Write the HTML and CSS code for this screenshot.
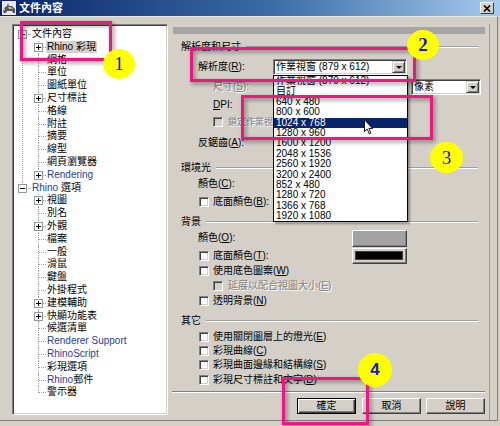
FILE: index.html
```html
<!DOCTYPE html>
<html lang="zh-Hant">
<head>
  <meta charset="UTF-8" />
  <title>文件內容</title>
  <link rel="stylesheet" href="styles.css">
</head>
<body>

  <div class="window">

    <!-- Title bar -->
    <div class="titlebar">
      <svg class="app-icon" viewBox="0 0 14 14">
        <rect x="0" y="0" width="14" height="14" fill="#e8e8e8" />
        <path d="M1 10 L3 6 L5 5 L6 2 L7 5 L10 5 L13 8 L13 12 L11 12 L10 10 L5 10 L4 12 L2 12 Z" fill="#555" />
        <path d="M6 6 L9 6 L11 8 L7 8 Z" fill="#bbb" />
        <rect x="2" y="8" width="1" height="1" fill="#fff" />
      </svg>
      <span class="title">文件內容</span>
      <div class="close">
        <svg viewBox="0 0 8 7" width="8" height="7">
          <path d="M1 0.5 L7 6.5 M7 0.5 L1 6.5" stroke="#000" stroke-width="1.6" />
        </svg>
      </div>
    </div>

    <div class="main">

      <!-- Left tree -->
      <div class="tree">
        <ul class="tree-root">
          <li>
            <div class="node"><i class="exp"></i>文件內容</div>
            <ul>
              <li><div class="node"><i class="exp plus"></i><span class="sel">Rhino 彩現</span></div></li>
              <li><div class="node">網格</div></li>
              <li><div class="node">單位</div></li>
              <li><div class="node">圖紙單位</div></li>
              <li><div class="node"><i class="exp plus"></i>尺寸標註</div></li>
              <li><div class="node">格線</div></li>
              <li><div class="node">附註</div></li>
              <li><div class="node">摘要</div></li>
              <li><div class="node">線型</div></li>
              <li><div class="node">網頁瀏覽器</div></li>
              <li><div class="node"><i class="exp plus"></i><span class="en">Rendering</span></div></li>
            </ul>
          </li>
          <li>
            <div class="node"><i class="exp"></i><span class="en">Rhino</span> 選項</div>
            <ul>
              <li><div class="node"><i class="exp plus"></i>視圖</div></li>
              <li><div class="node">別名</div></li>
              <li><div class="node"><i class="exp plus"></i>外觀</div></li>
              <li><div class="node">檔案</div></li>
              <li><div class="node">一般</div></li>
              <li><div class="node">滑鼠</div></li>
              <li><div class="node">鍵盤</div></li>
              <li><div class="node">外掛程式</div></li>
              <li><div class="node"><i class="exp plus"></i>建模輔助</div></li>
              <li><div class="node"><i class="exp plus"></i>快顯功能表</div></li>
              <li><div class="node">候選清單</div></li>
              <li><div class="node"><span class="en">Renderer Support</span></div></li>
              <li><div class="node"><span class="en">RhinoScript</span></div></li>
              <li><div class="node">彩現選項</div></li>
              <li><div class="node"><span class="en">Rhino</span>郵件</div></li>
              <li><div class="node">警示器</div></li>
            </ul>
          </li>
        </ul>
      </div>

      <!-- Right page -->
      <div class="page">
        <div class="page-bar"></div>

        <div class="group mt6">
          <div class="group-title">解析度和尺寸</div>

          <div class="field mt5">
            <span class="lbl">解析度(<u>R</u>):</span>
            <div class="combo wide">
              <span class="combo-text">作業視窗 (879 x 612)</span><i class="drop"></i>
              <ul class="droplist">
                <li>作業視窗 (879 x 612)</li>
                <li>自訂</li>
                <li>640 x 480</li>
                <li>800 x 600</li>
                <li class="hl">1024 x 768</li>
                <li>1280 x 960</li>
                <li>1600 x 1200</li>
                <li>2048 x 1536</li>
                <li>2560 x 1920</li>
                <li>3200 x 2400</li>
                <li>852 x 480</li>
                <li>1280 x 720</li>
                <li>1366 x 768</li>
                <li>1920 x 1080</li>
              </ul>
            </div>
          </div>

          <div class="field sub mt4">
            <span class="lbl dis">尺寸(<u>S</u>):</span>
            <div class="combo wide"><span class="combo-text"></span><i class="drop"></i></div>
            <div class="combo unit"><span class="combo-text">像素</span><i class="drop"></i></div>
          </div>

          <div class="field sub mt2">
            <span class="lbl"><u>D</u>PI:</span>
          </div>

          <!-- only the start of this label shows beside the open list -->
          <div class="check sub dis mt2"><i class="box"></i><span class="short">鎖定作業視</span></div>

          <div class="field mt6">
            <span class="lbl">反鋸齒(<u>A</u>):</span>
          </div>
        </div>

        <div class="group mt10">
          <div class="group-title">環境光</div>
          <div class="field row14 mt2"><span class="lbl">顏色(<u>C</u>):</span></div>
          <div class="check mt4"><i class="box"></i>底面顏色(<u>B</u>):</div>
        </div>

        <div class="group mt6">
          <div class="group-title">背景</div>
          <div class="field tall">
            <span class="lbl swatch-lbl">顏色(<u>O</u>):</span>
            <div class="swatch gray"></div>
          </div>
          <div class="field swatch-row mt1">
            <div class="check"><i class="box"></i>底面顏色(<u>T</u>):</div>
            <div class="swatch dark"><i></i></div>
          </div>
          <div class="check"><i class="box"></i>使用底色圖案(<u>W</u>)</div>
          <div class="check sub dis mt1"><i class="box"></i>延展以配合視圖大小(<u>E</u>)</div>
          <div class="check mt1"><i class="box"></i>透明背景(<u>N</u>)</div>
        </div>

        <div class="group mt6">
          <div class="group-title">其它</div>
          <div class="check mt2"><i class="box"></i>使用關閉圖層上的燈光(<u>E</u>)</div>
          <div class="check"><i class="box"></i>彩現曲線(<u>C</u>)</div>
          <div class="check"><i class="box"></i>彩現曲面邊緣和結構線(<u>S</u>)</div>
          <div class="check mt1"><i class="box"></i>彩現尺寸標註和文字(<u>D</u>)</div>
        </div>

        <div class="separator"></div>

        <div class="buttons">
          <div class="btn default">確定</div>
          <div class="btn">取消</div>
          <div class="btn">說明</div>
        </div>
      </div>

    </div>
  </div>

  <!-- mouse pointer over the open list -->
  <svg class="cursor" viewBox="0 0 11 17" width="10" height="16">
    <path d="M0.5 0.5 L0.5 13.5 L3.5 10.8 L5.8 16 L7.6 15.2 L5.4 10.2 L9.5 10.2 Z" fill="#fff" stroke="#000" stroke-width="1" />
  </svg>

  <!-- Annotation marks -->
  <div class="mark m1"></div>
  <div class="mark m2"></div>
  <div class="mark m3"></div>
  <div class="mark m4"></div>
  <div class="num n1">1</div>
  <div class="num n2">2</div>
  <div class="num n3">3</div>
  <div class="num n4">4</div>

</body>
</html>
```

FILE: styles.css
```css
* {
  box-sizing: border-box;
}

html, body {
  margin: 0;
}

body {
  position: relative;
  width: 500px;
  height: 426px;
  overflow: hidden;
  background: #d4d0c8;
  font-family: "Liberation Sans Narrow", "Liberation Sans", "Noto Sans CJK TC", sans-serif;
  font-size: 10px;
  color: #000;
}

u {
  text-decoration: underline;
}

.window {
  width: 500px;
  height: 426px;
  display: flex;
  flex-direction: column;
}

/* Title bar */
.titlebar {
  flex: none;
  height: 16px;
  display: flex;
  align-items: center;
  padding: 0 6px 0 2px;
  background: linear-gradient(to right, #0a246a, #3a6ea5 55%, #a6caf0);
}

.app-icon {
  width: 14px;
  height: 14px;
}

.title {
  margin-left: 3px;
  color: #fff;
  font-weight: bold;
  font-size: 11px;
  line-height: 14px;
}

.close {
  margin-left: auto;
  width: 14px;
  height: 12px;
  display: flex;
  align-items: center;
  justify-content: center;
  background: #d4d0c8;
  border: 1px solid;
  border-color: #fff #404040 #404040 #fff;
}

.main {
  flex: none;
  width: 498px;
  height: 405px;
  display: flex;
  gap: 4px;
  padding: 7px 0 0 12px;
  border-top: 1px solid #e8e6e0;
  border-right: 1px solid #808080;
  border-bottom: 1px solid #808080;
}

/* Tree */
.tree {
  flex: none;
  width: 156px;
  height: 391px;
  padding: 3px 0 0 1px;
  background: #fff;
  border: 1px solid;
  border-color: #808080 #fff #fff #808080;
  box-shadow: inset 1px 1px #404040, inset -1px -1px #d4d0c8;
  overflow: hidden;
}

.tree ul {
  list-style: none;
  margin: 0;
  padding: 0;
}

.tree li {
  position: relative;
}

.tree-root > li::before {
  content: "";
  position: absolute;
  left: 8px;
  border-left: 1px dotted #a0a0a0;
}

.tree-root > li:first-child::before {
  top: 6px;
  bottom: 0;
}

.tree-root > li:last-child::before {
  top: 0;
  height: 7px;
}

.tree-root > li::after {
  content: "";
  position: absolute;
  left: 9px;
  top: 6px;
  width: 8px;
  border-top: 1px dotted #a0a0a0;
}

.tree-root ul > li::before {
  content: "";
  position: absolute;
  left: 24px;
  top: 0;
  bottom: 0;
  border-left: 1px dotted #a0a0a0;
}

.tree-root ul > li:last-child::before {
  bottom: auto;
  height: 7px;
}

.tree-root ul > li::after {
  content: "";
  position: absolute;
  left: 25px;
  top: 6px;
  width: 7px;
  border-top: 1px dotted #a0a0a0;
}

.node {
  position: relative;
  height: 12.8px;
  line-height: 12.8px;
  padding-left: 18px;
  white-space: nowrap;
}

.tree-root ul .node {
  padding-left: 33px;
}

.exp {
  position: absolute;
  z-index: 1;
  left: 4px;
  top: 2px;
  width: 9px;
  height: 9px;
  background: #fff;
  border: 1px solid #8e9aa0;
}

.tree-root ul .exp {
  left: 20px;
}

.exp::before {
  content: "";
  position: absolute;
  left: 1px;
  top: 3px;
  width: 5px;
  height: 1px;
  background: #000;
}

.exp.plus::after {
  content: "";
  position: absolute;
  left: 3px;
  top: 1px;
  width: 1px;
  height: 5px;
  background: #000;
}

.sel {
  display: inline-block;
  margin-left: -1px;
  padding: 0 1px;
  line-height: 12px;
  background: #d6d3ce;
}

.en {
  color: #26409a;
}

/* Right page */
.page {
  flex: none;
  width: 318px;
  padding-right: 4px;
  border-right: 1px solid #9a9a9a;
  display: flex;
  flex-direction: column;
}

.page-bar {
  height: 7px;
  margin: 3px 0 0 1px;
  background: #a6a6a6;
}

.group {
  display: flex;
  flex-direction: column;
  margin-left: 9px;
  margin-right: 7px;
}

.group-title {
  display: flex;
  align-items: center;
  height: 14px;
  line-height: 14px;
  white-space: nowrap;
}

.group-title::after {
  content: "";
  flex: 1;
  margin-left: 5px;
  border-top: 1px solid #a0a0a0;
  border-bottom: 1px solid #fff;
}

.field {
  display: flex;
  align-items: center;
  height: 16px;
  padding-left: 17px;
  white-space: nowrap;
}

.field.sub {
  padding-left: 32px;
}

.field.row14 {
  height: 14px;
}

.field.tall {
  height: 18px;
}

.lbl {
  flex: none;
  width: 75px;
  line-height: 14px;
}

.field.sub .lbl {
  width: 60px;
}

.lbl.swatch-lbl {
  width: 154px;
}

.dis {
  color: #808080;
  text-shadow: 1px 1px 0 #fff;
}

.short {
  font-size: 9px;
}

/* Combo boxes */
.combo {
  position: relative;
  flex: none;
  height: 16px;
  display: flex;
  align-items: center;
  background: #fff;
  border: 1px solid;
  border-color: #808080 #fff #fff #808080;
  box-shadow: inset 1px 1px #404040, inset -1px -1px #d4d0c8;
}

.combo.wide {
  width: 134px;
}

.combo.unit {
  width: 70px;
  margin-left: 4px;
}

.combo-text {
  flex: 1;
  padding-left: 2px;
  line-height: 14px;
}

.drop {
  position: relative;
  width: 13px;
  height: 12px;
  margin-right: 1px;
  background: #d4d0c8;
  border: 1px solid;
  border-color: #d4d0c8 #404040 #404040 #d4d0c8;
  box-shadow: inset 1px 1px #fff, inset -1px -1px #808080;
}

.drop::after {
  content: "";
  position: absolute;
  left: 3px;
  top: 4px;
  border-left: 3px solid transparent;
  border-right: 3px solid transparent;
  border-top: 3px solid #000;
}

.droplist {
  position: absolute;
  z-index: 5;
  left: -1px;
  top: 15px;
  width: 135px;
  margin: 0;
  padding: 0;
  list-style: none;
  background: #fff;
  border: 1px solid #000;
  box-shadow: 2px 2px 2px rgba(0, 0, 0, 0.35);
}

.droplist li {
  height: 10.4px;
  line-height: 10.4px;
  padding-left: 2px;
  white-space: nowrap;
  overflow: hidden;
}

.droplist li.hl {
  background: #0a246a;
  color: #fff;
}

/* Check boxes */
.check {
  display: flex;
  align-items: center;
  height: 14px;
  line-height: 14px;
  padding-left: 18px;
  white-space: nowrap;
}

.check.sub {
  padding-left: 32px;
}

.box {
  flex: none;
  width: 10px;
  height: 10px;
  margin-right: 4px;
  background: #fff;
  border: 1px solid;
  border-color: #808080 #fff #fff #808080;
  box-shadow: inset 1px 1px #404040, inset -1px -1px #d4d0c8;
}

.check.sub .box {
  margin-right: 5px;
}

.check.dis .box {
  background: #d4d0c8;
}

/* Colour swatches */
.swatch-row {
  padding-left: 0;
}

.swatch-row .check {
  width: 171px;
}

.swatch {
  flex: none;
  width: 55px;
  border: 1px solid;
  border-color: #fff #404040 #404040 #fff;
  box-shadow: inset -1px -1px #808080;
}

.swatch.gray {
  height: 17px;
  background: #a3a3a3;
}

.swatch.dark {
  height: 16px;
  padding: 2px 3px 3px 2px;
  background: #d4d0c8;
}

.swatch.dark i {
  display: block;
  height: 100%;
  background: #000;
  border: 1px solid #404040;
}

.mt1 { margin-top: 1px; }
.mt2 { margin-top: 2px; }
.mt4 { margin-top: 4px; }
.mt5 { margin-top: 5px; }
.mt6 { margin-top: 6px; }
.mt10 { margin-top: 10px; }

.separator {
  margin-top: 4px;
  height: 2px;
  border-top: 1px solid #808080;
  border-bottom: 1px solid #fff;
}

.buttons {
  display: flex;
  justify-content: flex-end;
  gap: 5px;
  margin-top: 5px;
}

.btn {
  width: 59px;
  height: 16px;
  line-height: 14px;
  text-align: center;
  background: #d4d0c8;
  border: 1px solid;
  border-color: #fff #404040 #404040 #fff;
  box-shadow: inset -1px -1px #808080;
}

.btn.default {
  margin-right: 1px;
  border-color: #000;
  box-shadow: inset 1px 1px #fff, inset -1px -1px #404040, inset -2px -2px #808080;
}

/* Pointer */
.cursor {
  position: absolute;
  z-index: 6;
  left: 364px;
  top: 119px;
}

/* Annotations */
.mark {
  position: absolute;
  z-index: 10;
  border: 3px solid #f2157f;
  filter: drop-shadow(2px 2px 2px rgba(0, 0, 0, 0.45));
}

.m1 { left: 20px; top: 21px; width: 92px; height: 40px; }
.m2 { left: 190px; top: 47px; width: 226px; height: 35px; }
.m3 { left: 241px; top: 95px; width: 192px; height: 45px; }
.m4 { left: 282px; top: 377px; width: 87px; height: 48px; }

.num {
  position: absolute;
  z-index: 11;
  width: 32px;
  height: 30px;
  display: flex;
  align-items: center;
  justify-content: center;
  border-radius: 50%;
  background: #ffff00;
  color: #1414e6;
  font-family: "Liberation Serif", serif;
  font-size: 19px;
}

.n1 { left: 103px; top: 49px; }
.n2 { left: 407px; top: 30px; font-weight: bold; }
.n3 { left: 430px; top: 142px; width: 33px; height: 31px; }
.n4 { left: 358px; top: 353px; width: 34px; height: 34px; font-family: "Liberation Sans", sans-serif; font-weight: bold; font-size: 17px; }
```
